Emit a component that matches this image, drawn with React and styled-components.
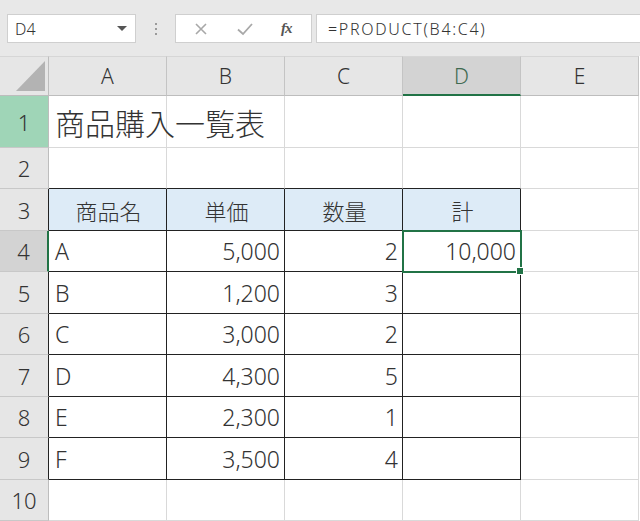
import React from "react";
import styled, { createGlobalStyle, css } from "styled-components";

const Global = createGlobalStyle`
  html, body { margin: 0; padding: 0; background: #fff; }
  body { font-family: "Noto Sans CJK JP", "Noto Sans", sans-serif; overflow: hidden; }
`;

const Page = styled.div`
  width: 640px;
  height: 521px;
  overflow: hidden;
  background: #fff;
  display: flex;
  flex-direction: column;
`;

const Toolbar = styled.div`
  height: 56px;
  background: #e8e8e8;
  display: flex;
  align-items: flex-start;
  padding-top: 14px;
  padding-left: 7px;
  box-sizing: border-box;
`;

const NameBox = styled.div`
  width: 129px;
  height: 29px;
  box-sizing: border-box;
  background: #fff;
  border: 1px solid #cfcfcf;
  display: flex;
  align-items: center;
  justify-content: space-between;
  padding: 0 8px 0 7px;
  font-family: "Noto Sans", sans-serif;
  font-weight: 300;
  font-size: 16px;
  color: #333;
`;

const Caret = styled.span`
  width: 0;
  height: 0;
  border-left: 5px solid transparent;
  border-right: 5px solid transparent;
  border-top: 5px solid #555;
`;

const Dots = styled.div`
  width: 39px;
  height: 29px;
  display: flex;
  flex-direction: column;
  align-items: center;
  justify-content: center;
  gap: 3px;
`;

const Dot = styled.span`
  width: 2px;
  height: 2px;
  background: #9a9a9a;
`;

const IconBox = styled.div`
  width: 137px;
  height: 29px;
  box-sizing: border-box;
  background: #fff;
  border: 1px solid #cfcfcf;
  display: flex;
  align-items: center;
  justify-content: space-around;
  padding: 0 6px 0 4px;
`;

const Fx = styled.span`
  font-family: "Liberation Serif", "Times New Roman", serif;
  font-style: italic;
  font-weight: bold;
  font-size: 15px;
  color: #555;
  letter-spacing: -1px;
`;

const FormulaBox = styled.div`
  margin-left: 4px;
  flex: 1;
  height: 29px;
  box-sizing: border-box;
  background: #fff;
  border: 1px solid #cfcfcf;
  border-right: none;
  display: flex;
  align-items: center;
  padding-left: 11px;
  font-family: "Noto Sans", sans-serif;
  font-weight: 300;
  font-size: 16px;
  letter-spacing: 1.7px;
  color: #333;
`;

const Grid = styled.div`
  display: grid;
  grid-template-columns: 49px repeat(5, 118px);
  grid-template-rows: 40px 52px 41px 42px 41px 42px 41px 42px 41px 42px 41px;
`;

const Corner = styled.div`
  background: #e6e6e6;
  border-top: 1px solid #d6d6d6;
  border-right: 1px solid #bdbdbd;
  border-bottom: 1px solid #bdbdbd;
  box-sizing: border-box;
  display: flex;
  align-items: flex-end;
  justify-content: flex-end;
  padding: 0 3px 4px 0;
`;

const ColHead = styled.div`
  background: ${(p) => (p.$active ? "#d3d3d3" : "#e6e6e6")};
  border-top: 1px solid #d6d6d6;
  border-right: 1px solid #c4c4c4;
  border-bottom: ${(p) => (p.$active ? "2px solid #217346" : "1px solid #bdbdbd")};
  box-sizing: border-box;
  display: flex;
  align-items: center;
  justify-content: center;
  font-family: "Noto Sans", sans-serif;
  font-weight: 300;
  font-size: 21px;
  color: ${(p) => (p.$active ? "#3f6a50" : "#333")};
`;

const RowHead = styled.div`
  background: ${(p) => (p.$tone === "green" ? "#9fd5b7" : p.$tone === "sel" ? "#d3d3d3" : "#e6e6e6")};
  border-right: ${(p) =>
    p.$tone === "sel" ? "2px solid #217346" : p.$dark ? "1px solid #222" : "1px solid #bdbdbd"};
  border-bottom: 1px solid #c8c8c8;
  box-sizing: border-box;
  display: flex;
  align-items: center;
  justify-content: center;
  font-family: "Noto Sans", sans-serif;
  font-weight: 300;
  font-size: 22px;
  color: #333;
`;

const Cell = styled.div`
  position: relative;
  z-index: ${(p) => (p.$title ? 1 : "auto")};
  box-sizing: border-box;
  border-right: 1px solid ${(p) => (p.$darkRight ? "#222" : "#d9d9d9")};
  border-bottom: 1px solid ${(p) => (p.$darkBottom ? "#222" : "#d9d9d9")};
  background: ${(p) => (p.$head ? "#ddebf7" : "#fff")};
  display: flex;
  align-items: center;
  justify-content: ${(p) => (p.$align === "right" ? "flex-end" : p.$align === "center" ? "center" : "flex-start")};
  padding: 0 4px 0 6px;
  font-family: "Noto Sans CJK JP", "Noto Sans", sans-serif;
  font-weight: 300;
  font-size: ${(p) => (p.$title ? "30px" : "22px")};
  color: #333;
  white-space: nowrap;
  overflow: visible;
  ${(p) =>
    p.$title &&
    css`
      background: transparent;
    `}
  ${(p) =>
    p.$selected &&
    css`
      &::after {
        content: "";
        position: absolute;
        left: -1px;
        top: -1px;
        right: -2px;
        bottom: -2px;
        border: 2px solid #217346;
        pointer-events: none;
        z-index: 2;
      }
      &::before {
        content: "";
        position: absolute;
        width: 6px;
        height: 6px;
        right: -4px;
        bottom: -4px;
        background: #217346;
        border: 1px solid #fff;
        z-index: 3;
      }
    `}
`;

const Num = styled.span`
  font-family: "Noto Sans", sans-serif;
  font-weight: 300;
  font-size: 23px;
`;

const cols = ["A", "B", "C", "D", "E"];

const data = [
  ["A", "5,000", "2", "10,000"],
  ["B", "1,200", "3", ""],
  ["C", "3,000", "2", ""],
  ["D", "4,300", "5", ""],
  ["E", "2,300", "1", ""],
  ["F", "3,500", "4", ""],
];

export default function App() {
  const rows = [];
  rows.push(
    <React.Fragment key="r1">
      <RowHead $tone="green">1</RowHead>
      <Cell $title>商品購入一覧表</Cell>
      <Cell />
      <Cell />
      <Cell />
      <Cell />
    </React.Fragment>
  );
  rows.push(
    <React.Fragment key="r2">
      <RowHead>2</RowHead>
      <Cell $darkBottom />
      <Cell $darkBottom />
      <Cell $darkBottom />
      <Cell $darkBottom />
      <Cell />
    </React.Fragment>
  );
  rows.push(
    <React.Fragment key="r3">
      <RowHead $dark>3</RowHead>
      {["商品名", "単価", "数量", "計"].map((t) => (
        <Cell key={t} $head $align="center" $darkRight $darkBottom>
          {t}
        </Cell>
      ))}
      <Cell />
    </React.Fragment>
  );
  data.forEach((r, i) => {
    const n = i + 4;
    rows.push(
      <React.Fragment key={"r" + n}>
        <RowHead $tone={n === 4 ? "sel" : undefined} $dark>
          {n}
        </RowHead>
        <Cell $darkRight $darkBottom>
          <Num>{r[0]}</Num>
        </Cell>
        <Cell $darkRight $darkBottom $align="right">
          <Num>{r[1]}</Num>
        </Cell>
        <Cell $darkRight $darkBottom $align="right">
          <Num>{r[2]}</Num>
        </Cell>
        <Cell $darkRight $darkBottom $align="right" $selected={n === 4}>
          {r[3] && <Num>{r[3]}</Num>}
        </Cell>
        <Cell />
      </React.Fragment>
    );
  });
  rows.push(
    <React.Fragment key="r10">
      <RowHead>10</RowHead>
      <Cell />
      <Cell />
      <Cell />
      <Cell />
      <Cell />
    </React.Fragment>
  );

  return (
    <>
      <Global />
      <Page>
        <Toolbar>
          <NameBox>
            <span>D4</span>
            <Caret />
          </NameBox>
          <Dots>
            <Dot />
            <Dot />
            <Dot />
          </Dots>
          <IconBox>
            <svg width="16" height="16" viewBox="0 0 16 16">
              <path d="M3 3 L13 13 M13 3 L3 13" stroke="#a8a8a8" strokeWidth="1.6" fill="none" />
            </svg>
            <svg width="18" height="16" viewBox="0 0 18 16">
              <path d="M2 8.5 L7 13 L16 3" stroke="#a8a8a8" strokeWidth="1.8" fill="none" />
            </svg>
            <Fx>fx</Fx>
          </IconBox>
          <FormulaBox>=PRODUCT(B4:C4)</FormulaBox>
        </Toolbar>
        <Grid>
          <Corner>
            <svg width="29" height="30" viewBox="0 0 29 30">
              <polygon points="29,0 29,30 0,30" fill="#b3b3b3" />
            </svg>
          </Corner>
          {cols.map((c) => (
            <ColHead key={c} $active={c === "D"}>
              {c}
            </ColHead>
          ))}
          {rows}
        </Grid>
      </Page>
    </>
  );
}
